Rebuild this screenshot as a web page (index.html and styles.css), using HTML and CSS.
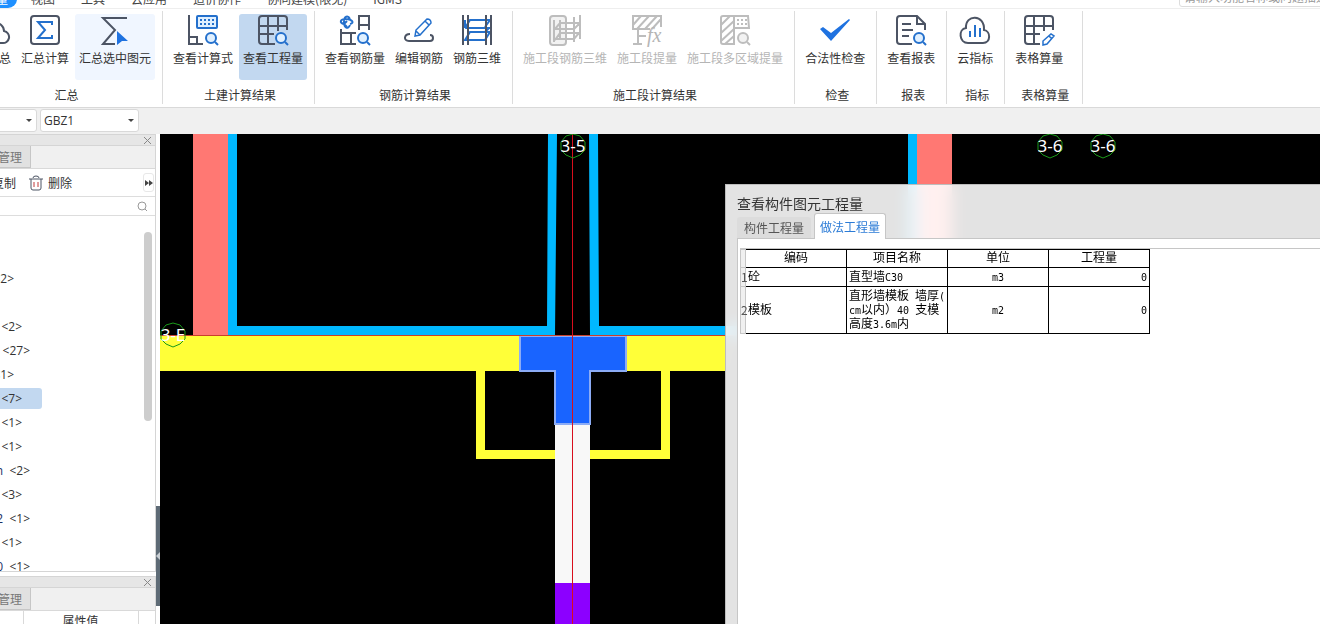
FILE: index.html
```html
<!DOCTYPE html>
<html lang="zh-CN">
<head>
<meta charset="utf-8">
<title>查看工程量</title>
<link rel="stylesheet" href="styles.css">
</head>
<body>
<svg class="defs" width="0" height="0" aria-hidden="true">
  <defs>
    <g id="lens"><circle cx="23" cy="23" r="5"/><path d="M27 27l3 3"/></g>
    <g id="close"><path d="M1 1l7 7M8 1l-7 7"/></g>
    <g id="bubble"><path d="M0 -12L7 -10L12 -4V4L7 9L0 12L-7 9L-12 4V-4L-7 -10Z" fill="none" stroke="#1a9a1a"/></g>
  </defs>
</svg>

<nav class="menu">
  <a class="menu-item current" href="#">工程量</a>
  <a class="menu-item" href="#">视图</a>
  <a class="menu-item" href="#">工具</a>
  <a class="menu-item" href="#">云应用</a>
  <a class="menu-item" href="#">造价协作</a>
  <a class="menu-item" href="#">协同建模(限免)</a>
  <a class="menu-item" href="#">IGMS</a>
  <input class="menu-search" type="text" aria-label="搜索" placeholder="请输入功能名称或问题描述">
</nav>

<header class="ribbon">
  <section class="group group-first">
    <div class="tools">
      <button class="tool"><svg class="icon" viewBox="0 0 30 30"><path d="M8 28h16a6 6 0 0 0 2-12C26 6 8 3 6 15a7 7 0 0 0 2 13z"/></svg>云汇总</button>
      <button class="tool"><svg class="icon" viewBox="0 0 30 30"><rect x="1" y="1" width="28" height="28" rx="3"/><path class="blue" d="M22 10V7H8l7 8-7 8h14v-3"/></svg>汇总计算</button>
      <button class="tool hover"><svg class="icon" viewBox="0 0 30 30"><path d="M27 3H3l12 12L3 29h12"/><path class="solid" d="M17 16v14l5-4h6z"/></svg>汇总选中图元</button>
    </div>
    <h2 class="caption">汇总</h2>
  </section>
  <section class="group">
    <div class="tools">
      <button class="tool wide"><svg class="icon" viewBox="0 0 30 30"><path d="M1 0v29h14M1 22h8v7"/><rect class="blue tint" x="9" y="1" width="20" height="12" rx="1"/><path class="blue dots" d="M12 5h15M12 9h15"/><use class="blue tint" href="#lens"/></svg>查看计算式</button>
      <button class="tool wide active"><svg class="icon" viewBox="0 0 30 30"><path d="M29 15V4a3 3 0 0 0-3-3H4a3 3 0 0 0-3 3v22a3 3 0 0 0 3 3h13M10 1v28M20 1v15M1 11h28M1 19h15"/><use class="blue tint" href="#lens"/></svg>查看工程量</button>
    </div>
    <h2 class="caption">土建计算结果</h2>
  </section>
  <section class="group">
    <div class="tools">
      <button class="tool"><svg class="icon" viewBox="0 0 30 30"><path class="blue" d="M10 4c-2-4-6-3-6 3s4 8 6 3M4 9c-5-1-4-5 2-5s9 4 4 5M7 6l-3 3 3 3"/><path d="M19 15V1h10v14M19 10h10M1 14v15h15M1 18h15M11 18v11"/><use class="blue tint" href="#lens"/></svg>查看钢筋量</button>
      <button class="tool"><svg class="icon" viewBox="0 0 30 30"><path d="M6 19c-6 0-7 7-1 7h21c4 0 4-6 0-6"/><path class="blue thin" d="M11 21l1-6L23 4q4 0 4 4L16 20zM12 16l4 4M21 6l4 4"/></svg>编辑钢筋</button>
      <button class="tool"><svg class="icon" viewBox="0 0 30 30"><path class="blue" d="M3 13l5-8h20l-5 7M3 13h25M3 25l5-8h20l-5 8zM3 5v8M27 13l-4 4"/><path d="M1 0v30M6 0v30M24 0v30M29 0v30"/></svg>钢筋三维</button>
    </div>
    <h2 class="caption">钢筋计算结果</h2>
  </section>
  <section class="group">
    <div class="tools">
      <button class="tool" disabled><svg class="icon" viewBox="0 0 30 30"><rect class="pale" x="0" y="1" width="16" height="29" rx="3"/><path d="M4 5v22M10 5v20M16 7v18M24 2v25M30 0v24M5 14l5-6h20M5 14h19l6-6M5 25l5-7h19l-5 6H5"/></svg>施工段钢筋三维</button>
      <button class="tool" disabled><svg class="icon" viewBox="0 0 30 30"><path d="M29 12V1H1v13h17M1 10l8-9M5 14L17 1M13 14L25 1M20 14l9-10"/><path d="M6 14v15M1 29h9M6 21h8"/><text class="fx" x="15" y="27">fx</text></svg>施工段提量</button>
      <button class="tool" disabled><svg class="icon" viewBox="0 0 30 30"><path d="M14 1H3a2 2 0 0 0-2 2v24q0 2 2 2h11zM14 1h14l1 12H14"/><path d="M1 10l9-9M1 18L14 6M1 26l13-12M5 29l9-8"/><path class="dots" d="M17 5h11M17 9h11"/><use class="pale" href="#lens"/></svg>施工段多区域提量</button>
    </div>
    <h2 class="caption">施工段计算结果</h2>
  </section>
  <section class="group">
    <div class="tools">
      <button class="tool"><svg class="icon" viewBox="0 0 30 30"><path class="solid" d="M0 14l3-2 8 6L29 4l1 1-19 21z"/></svg>合法性检查</button>
    </div>
    <h2 class="caption">检查</h2>
  </section>
  <section class="group">
    <div class="tools">
      <button class="tool"><svg class="icon" viewBox="0 0 30 30"><path d="M29 15V9l-8-8H4a3 3 0 0 0-3 3v22a3 3 0 0 0 3 3h12M21 1v8h8M6 9h9M6 15h11M6 21h7"/><use class="blue tint" href="#lens"/></svg>查看报表</button>
    </div>
    <h2 class="caption">报表</h2>
  </section>
  <section class="group">
    <div class="tools">
      <button class="tool"><svg class="icon" viewBox="0 0 30 30"><path d="M8 28h15c8 0 8-12 1-13C25-1 5-1 6 13c-8 1-7 15 2 15z"/><path class="blue" d="M10 16v6M15 10v12M20 13v9"/></svg>云指标</button>
    </div>
    <h2 class="caption">指标</h2>
  </section>
  <section class="group group-last">
    <div class="tools">
      <button class="tool"><svg class="icon" viewBox="0 0 30 30"><path d="M29 15V4a3 3 0 0 0-3-3H4a3 3 0 0 0-3 3v22a3 3 0 0 0 3 3h12M10 1v28M20 1v15M1 11h28M1 19h15"/><path class="blue thin" d="M19 30v-4l8-7 3 2-7 8zM25 21l3 3"/></svg>表格算量</button>
    </div>
    <h2 class="caption">表格算量</h2>
  </section>
</header>

<div class="selectors">
  <span class="combo combo-type"><select aria-label="构件类型"><option></option></select></span>
  <span class="combo"><select aria-label="构件"><option>GBZ1</option></select></span>
</div>

<main class="workspace">
  <aside class="side">
    <section class="panel panel-list">
      <div class="panel-head"><button class="close" aria-label="关闭"><svg width="9" height="9"><use href="#close"/></svg></button></div>
      <div class="panel-tabs"><button class="panel-tab">图纸管理</button></div>
      <div class="actions">
        <button class="action">复制</button>
        <button class="action"><svg width="14" height="16" viewBox="0 0 14 16"><path d="M0 4h14M2 4v9q0 2 2 2h6q2 0 2-2V4M4 3q0-2 3-2t3 2"/><path class="red" d="M5 7v5M9 7v5"/></svg>删除</button>
        <button class="more" aria-label="更多"><svg width="8" height="6"><path d="M0 0l4 3-4 3zM4 0l4 3-4 3z"/></svg></button>
      </div>
      <div class="find"><input type="text" aria-label="搜索构件"><svg width="11" height="11"><circle cx="5" cy="5" r="4"/><path d="M8 8l2 2"/></svg></div>
      <div class="tree">
        <ul class="rows">
          <li class="row" style="width:14px"></li>
          <li class="row" style="width:14px"></li>
          <li class="row" style="width:14px">&lt;2&gt;</li>
          <li class="row" style="width:14px"></li>
          <li class="row" style="width:22px">&lt;2&gt;</li>
          <li class="row" style="width:30px">&lt;27&gt;</li>
          <li class="row" style="width:14px">&lt;1&gt;</li>
          <li class="row selected" style="width:42px">&lt;7&gt;</li>
          <li class="row" style="width:22px">&lt;1&gt;</li>
          <li class="row" style="width:22px">&lt;1&gt;</li>
          <li class="row" style="width:30px"><b>n</b>  &lt;2&gt;</li>
          <li class="row" style="width:22px">&lt;3&gt;</li>
          <li class="row" style="width:30px"><b>2</b>  &lt;1&gt;</li>
          <li class="row" style="width:22px">&lt;1&gt;</li>
          <li class="row" style="width:30px"><b>0</b>  &lt;1&gt;</li>
        </ul>
        <div class="track"><div class="thumb"></div></div>
      </div>
    </section>
    <section class="panel panel-props">
      <div class="panel-head"><button class="close" aria-label="关闭"><svg width="9" height="9"><use href="#close"/></svg></button></div>
      <div class="panel-tabs"><button class="panel-tab">图层管理</button></div>
      <table class="props"><tr><th class="props-name"></th><th>属性值</th><th class="props-extra"></th></tr></table>
    </section>
  </aside>
  <div class="splitter"><button class="collapse" aria-label="收起"><svg width="4" height="8"><path d="M4 0v8L0 4z"/></svg></button></div>

  <div class="view">
    <svg class="drawing">
      <path fill="#ff7873" d="M33 0h35v201H33zM757 0h35v201h-35z"/>
      <path fill="#00b8ff" d="M68 0h9v192h310L388 0h9l-2 201H68zM748 0h9v201h-9zM429 0h9l1 192h270v9H430z"/>
      <path fill="#ffff38" d="M0 202h565v35H0zM316 237h9v79h176v-79h9v88H316z"/>
      <path fill="#f8f8f8" d="M395 290h35v159h-35z"/>
      <path fill="#8c00ff" d="M395 449h35v600h-35z"/>
      <path fill="#1964ff" stroke="#8cacf5" stroke-width="2" d="M360 202h106v35h-36v53h-35v-53h-35z"/>
      <path fill="#c8402c" d="M0 201h709v1H0z"/>
      <path fill="#d90f1c" d="M412 0h1v1050h-1z"/>
      <use href="#bubble" x="413" y="12"/><use href="#bubble" x="890" y="12"/><use href="#bubble" x="943" y="12"/><use href="#bubble" x="13" y="201"/>
      <g class="axis"><text x="413" y="18">3-5</text><text x="890" y="18">3-6</text><text x="943" y="18">3-6</text><text x="13" y="207">3-E</text></g>
    </svg>

    <section class="dialog">
      <h1 class="dialog-title">查看构件图元工程量</h1>
      <div class="dialog-tabs">
        <button class="dialog-tab">构件工程量</button>
        <button class="dialog-tab on">做法工程量</button>
      </div>
      <div class="sheet">
        <div class="sheet-body">
          <table class="grid">
            <colgroup><col class="col-no"><col><col><col><col></colgroup>
            <tr class="grid-head"><th class="no"></th><th>编码</th><th>项目名称</th><th>单位</th><th>工程量</th></tr>
            <tr class="short"><th class="no">1</th><td>砼</td><td>直型墙<span class="half">C30</span></td><td class="unit"><span class="half">m3</span></td><td class="qty"><span class="half">0</span></td></tr>
            <tr class="tall"><th class="no">2</th><td>模板</td><td>直形墙模板<span class="half"> </span>墙厚<span class="half">(</span><br><span class="half">cm</span>以内）<span class="half">40 </span>支模<br>高度<span class="half">3.6m</span>内</td><td class="unit"><span class="half">m2</span></td><td class="qty"><span class="half">0</span></td></tr>
          </table>
        </div>
      </div>
    </section>
  </div>
</main>
</body>
</html>
```

FILE: styles.css
```css
* { box-sizing: border-box; }
body {
  margin: 0;
  height: 100vh;
  display: flex;
  flex-direction: column;
  overflow: hidden;
  background: #fff;
  color: #333;
  font: 12px/18px "Noto Sans CJK SC", sans-serif;
}
button, input, select { font: inherit; color: inherit; margin: 0; padding: 0; border: 0; background: none; }
h1, h2, ul { margin: 0; padding: 0; font-weight: normal; list-style: none; }
.defs { position: absolute; }

/* menu */
.menu {
  flex: none;
  height: 9px;
  display: flex;
  align-items: flex-end;
  overflow: hidden;
  border-bottom: 1px solid #eee;
  gap: 26px;
}
.menu-item { flex: none; color: #444; text-decoration: none; line-height: 18px; }
.menu-item.current { margin: 0 -12px 0 -37px; padding: 0 9px; background: #1e90ff; color: #fff; border-radius: 0 0 9px 9px; }
.menu-search {
  flex: none;
  width: 260px;
  height: 22px;
  margin: 0 -119px 1px auto;
  padding: 0 4px;
  border: 1px solid #ddd;
  border-radius: 3px;
}
.menu-search::placeholder { color: #999; }

/* ribbon */
.ribbon { flex: none; display: flex; padding: 2px 0 3px; border-bottom: 1px solid #d9d9d9; }
.group { flex: none; display: flex; flex-direction: column; padding: 3px 7px 0 6px; border-right: 1px solid #dcdcdc; }
.group-first { margin-left: -32px; width: 195px; }
.group-last { width: 78px; }
.tools { display: flex; gap: 2px; }
.group-first .tools { justify-content: flex-end; }
.tool {
  flex: none;
  height: 66px;
  display: flex;
  flex-direction: column;
  align-items: center;
  gap: 4px;
  padding: 1px 4px 0;
  border-radius: 3px;
  white-space: nowrap;
}
.tool.hover { background: #f0f6ff; }
.tool.active { background: #c2d8f0; }
.tool:disabled { color: #b5b5b5; }
.caption { font-size: 12px; line-height: 24px; text-align: center; padding: 3px 0 0 4px; height: 24px; }
.icon { width: 30px; height: 30px; overflow: visible; fill: none; stroke: #4c5464; stroke-width: 2; }
.tool:disabled .icon { stroke: #bdbdbd; }
.icon .blue { stroke: #2470cc; }
.icon .tint { fill: #e0f0ff; }
.icon .pale { fill: #f2f2f2; }
.icon .thin { stroke-width: 1.5; }
.icon .solid { fill: #1f72e0; stroke: none; }
.icon .dots { stroke-dasharray: 2 2; }
.icon .fx { font: italic 20px "Liberation Serif", serif; fill: #b5b5b5; stroke: none; }

/* element selectors */
.selectors { flex: none; height: 26px; display: flex; gap: 3px; padding: 1px 0 2px; background: #f0f0f0; }
.combo { position: relative; width: 99px; border: 1px solid #d9d9d9; border-radius: 3px; background: #fff; }
.combo-type { margin-left: -62px; }
.combo select { width: 100%; height: 100%; padding-left: 3px; appearance: none; font-family: "Open Sans", sans-serif; }
.combo::after {
  content: "";
  position: absolute;
  right: 4px;
  top: 9px;
  border: 3px solid transparent;
  border-top-color: #444;
  border-bottom: 0;
  pointer-events: none;
}

/* side panels */
.workspace { flex: 1; min-height: 0; display: flex; }
.side { flex: none; width: 156px; display: flex; flex-direction: column; gap: 4px; }
.panel { border-right: 1px solid #d5d5d5; display: flex; flex-direction: column; }
.panel-list { flex: 1; min-height: 0; border-bottom: 1px solid #d5d5d5; }
.panel-props { flex: none; height: 48px; overflow: hidden; }
.panel-head { flex: none; height: 12px; display: flex; justify-content: flex-end; align-items: center; padding-right: 3px; background: #e6e6e6; border: solid #d5d5d5; border-width: 1px 0; }
.close { display: flex; }
.close svg { stroke: #888; fill: none; }
.panel-tabs { flex: none; height: 23px; display: flex; background: #f0f0f0; border-bottom: 1px solid #d9d9d9; }
.panel-tab { margin-left: -34px; padding: 0 8px; background: #e1e1e1; border: 1px solid #c6c6c6; border-width: 0 1px 1px 0; color: #777; }
.actions { flex: none; height: 28px; display: flex; align-items: center; gap: 13px; border-bottom: 1px solid #ddd; }
.action { display: flex; align-items: center; gap: 5px; flex: none; }
.action:first-child { margin-left: -8px; }
.action svg { fill: none; stroke: #4c5464; }
.action .red { stroke: #c23b3b; }
.more { margin: 0 1px 0 auto; width: 11px; height: 19px; display: flex; align-items: center; justify-content: center; border: 1px solid #e8e8e8; border-radius: 3px; }
.more svg { flex: none; fill: #444; }
.find { flex: none; height: 19px; display: flex; align-items: center; gap: 4px; padding-right: 7px; border-bottom: 1px solid #ddd; }
.find input { flex: 1; min-width: 0; height: 16px; }
.find svg { fill: none; stroke: #999; }
.tree { flex: 1; min-height: 0; display: flex; overflow: hidden; padding-top: 4px; }
.rows { flex: 1; font-family: "Open Sans", sans-serif; }
.row { display: flex; justify-content: flex-end; height: 21px; margin-bottom: 3px; line-height: 21px; white-space: pre; overflow: hidden; }
.row b { font-weight: normal; color: #1b2f66; }
.row.selected { padding-right: 20px; background: #c2d8f0; border-radius: 0 3px 3px 0; }
.track { width: 11px; padding-top: 12px; }
.thumb { width: 8px; height: 189px; border-radius: 4px; background: #cdcdcd; }
.props { width: 100%; border-collapse: collapse; table-layout: fixed; }
.props th { font-weight: normal; border-left: 1px solid #d9d9d9; padding: 0; height: 20px; }
.props .props-name { width: 23px; border-left: 0; }
.props-extra { width: 17px; }
.splitter { flex: none; width: 4px; display: flex; flex-direction: column; justify-content: flex-end; padding-bottom: 18px; background: #fff; }
.collapse { height: 100px; background: #5e6b76; display: flex; align-items: center; }
.collapse svg { fill: #c8ced3; }

/* drawing view */
.view { flex: 1; min-width: 0; position: relative; overflow: hidden; background: #000; }
.drawing { display: block; width: 100%; height: 100%; }
.axis { fill: #fff; font: 17px "Noto Sans", sans-serif; text-anchor: middle; }

/* quantity dialog, floats over the drawing */
.dialog {
  position: absolute;
  left: 565px;
  top: 50px;
  right: 0;
  bottom: 0;
  display: flex;
  flex-direction: column;
  padding: 8px 0 0 11px;
  border: solid #bdbdbd;
  border-width: 1px 0 0 1px;
  background: rgba(255, 255, 255, 0.89);
  backdrop-filter: blur(8px);
}
.dialog-title { font-size: 14px; line-height: 20px; }
.dialog-tabs { display: flex; align-items: flex-end; gap: 3px; height: 25px; }
.dialog-tab { height: 21px; padding: 0 7px; background: #dcdcdc; border-radius: 3px 3px 0 0; color: #555; }
.dialog-tab.on { position: relative; z-index: 1; height: 26px; margin-bottom: -1px; padding: 0 5px; border: 1px solid #c6c6c6; border-bottom: 0; background: #fff; color: #2b7bd6; }
.sheet { flex: 1; padding: 9px 0 0 2px; border: solid #c6c6c6; border-width: 1px 0 0 1px; background: #fff; }
.sheet-body { border-top: 1px solid #c6c6c6; }
.grid { width: 410px; border-collapse: collapse; table-layout: fixed; color: #000; line-height: 14px; }
.col-no { width: 5px; }
.grid th, .grid td { padding: 0 2px 2px; border: 1px solid #000; font-weight: normal; white-space: nowrap; text-align: left; }
.grid .grid-head th { height: 18px; line-height: 12px; padding-bottom: 3px; text-align: center; }
.short td { height: 19px; }
.tall td { height: 47px; }
.grid .no { padding: 0; border-color: #c6c6c6; background: #f0f0f0; color: #555; }
.grid .unit { text-align: center; }
.grid .qty { text-align: right; }
.half { font: 10px/10px "DejaVu Sans Mono", monospace; white-space: pre; }
```
